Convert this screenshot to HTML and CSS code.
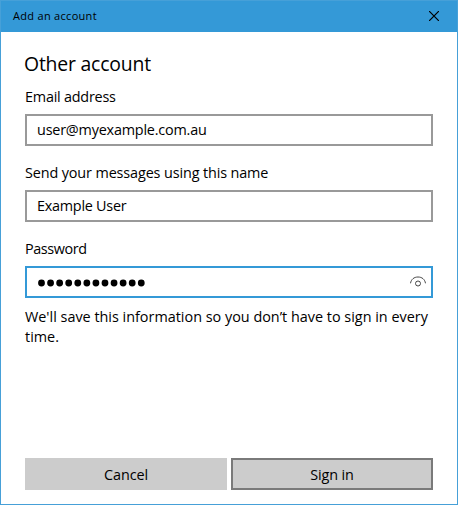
FILE: index.html
```html
<!DOCTYPE html>
<html lang="en">
<head>
<meta charset="utf-8">
<title>Add an account</title>
<link rel="stylesheet" href="styles.css">
</head>
<body>
<main class="dialog">
  <header class="titlebar">
    <span class="caption">Add an account</span>
    <button class="close" aria-label="Close"><svg width="10" height="10" viewBox="0 0 10 10"><path d="M0 0L10 10M10 0L0 10"/></svg></button>
  </header>
  <form class="content">
    <h1 class="heading"><span class="t">Other account</span></h1>
    <div class="field">
      <div class="label"><span class="t email">Email address</span></div>
      <div class="box"><span class="t address">user@myexample.com.au</span></div>
    </div>
    <div class="field">
      <div class="label"><span class="t sender">Send your messages using this name</span></div>
      <div class="box"><span class="t name">Example User</span></div>
    </div>
    <div class="field">
      <div class="label"><span class="t pass">Password</span></div>
      <div class="box focused">
        <svg class="dots" width="108" height="9" viewBox="0 0 108 9"><path d="M4.500 5h99.900"/></svg>
        <svg class="eye" width="16" height="12" viewBox="0 0 16 12"><path d="M.5 7.300C1.200 3.300 4 1 8 1s6.800 2.300 7.500 6.300"/><circle cx="8" cy="7.500" r="2.500"/></svg>
      </div>
    </div>
    <p class="note"><span class="t">We'll save this information so you don’t have to sign in every</span><br>time.</p>
    <footer class="actions">
      <button type="button" class="btn">Cancel</button>
      <button type="button" class="btn primary">Sign in</button>
    </footer>
  </form>
</main>
</body>
</html>
```
FILE: styles.css
```css
* { box-sizing: border-box; }
body { margin: 0; font-family: "Open Sans", "Noto Sans", sans-serif; font-size: 14.4px; color: #000; }
button { font: inherit; color: inherit; padding: 0; margin: 0; }
.dialog { width: 458px; height: 505px; border: 1px solid #46a0d8; background: #fff; display: flex; flex-direction: column; }
.titlebar { height: 31px; flex: none; background: #3499d7; display: flex; align-items: center; justify-content: space-between; padding-left: 12px; font-size: 11px; }
.caption { letter-spacing: 0.3px; padding-bottom: 2px; }
.close { width: 46px; height: 31px; padding-bottom: 1px; border: 0; background: none; display: flex; align-items: center; justify-content: center; }
.close path { stroke: #000; stroke-width: 1.2; fill: none; }
.content { flex: 1; display: flex; flex-direction: column; padding: 18px 24px 14px; }
.heading { margin: 0 0 0 -1px; height: 29px; line-height: 28px; font-size: 19.4px; font-weight: 400; letter-spacing: -0.2px; }
.t { white-space: nowrap; }
.email { letter-spacing: -0.22px; }
.address { letter-spacing: -0.2px; }
.sender { letter-spacing: -0.12px; }
.name { letter-spacing: -0.25px; }
.pass { letter-spacing: -0.4px; }
.field { height: 76px; }
.label { height: 35px; line-height: 35px; }
.box { height: 32px; border: 2px solid #999; padding: 0 5px 2px 10px; display: flex; align-items: center; justify-content: space-between; }
.focused { border-color: #3499d7; padding-bottom: 0; }
.eye { fill: none; stroke: #333; stroke-width: 0.9; }
.dots { fill: none; stroke: #000; stroke-width: 6.8; stroke-linecap: round; stroke-dasharray: 0 9.07; }
.note { margin: 0; line-height: 20px; }
.actions { margin-top: auto; display: grid; grid-template-columns: 202px 202px; gap: 4px; }
.btn { height: 32px; border: 2px solid #ccc; background: #ccc; letter-spacing: -0.1px; }
.primary { border-color: #7a7a7a; }
```
